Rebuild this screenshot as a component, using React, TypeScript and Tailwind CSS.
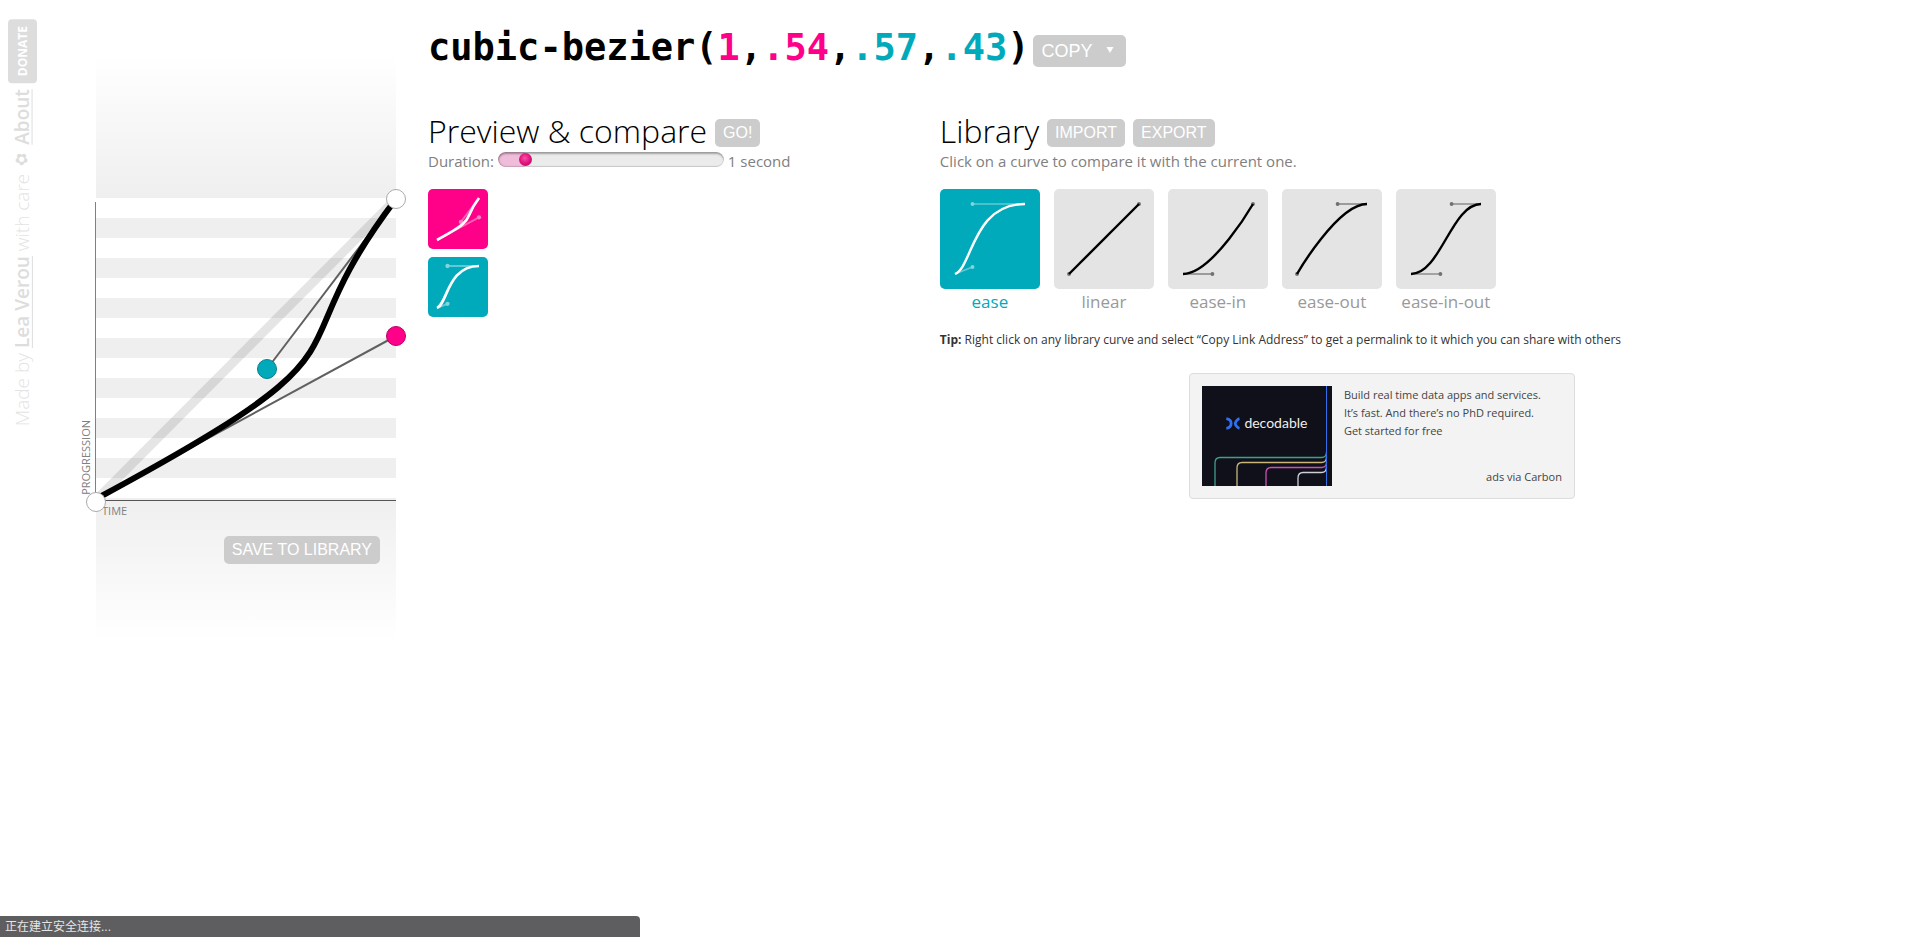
import React, { useState } from "react";

type Curve = [number, number, number, number];

const LIBRARY: { name: string; curve: Curve }[] = [
  { name: "ease", curve: [0.25, 0.1, 0.25, 1] },
  { name: "linear", curve: [0, 0, 1, 1] },
  { name: "ease-in", curve: [0.42, 0, 1, 1] },
  { name: "ease-out", curve: [0, 0, 0.58, 1] },
  { name: "ease-in-out", curve: [0.42, 0, 0.58, 1] },
];

const CURRENT: Curve = [1, 0.54, 0.57, 0.43];

function CurveIcon({ curve, stroke, className }: { curve: Curve; stroke: number; className: string }) {
  const px = (v: number) => 15 + v * 70;
  const py = (v: number) => 85 - v * 70;
  const [x1, y1, x2, y2] = curve;
  return (
    <svg viewBox="0 0 100 100" className={className} fill="none" stroke="currentColor" aria-hidden="true">
      <g opacity="0.5" strokeWidth={stroke * 0.7}>
        <path d={`M15 85L${px(x1)} ${py(y1)}M85 15L${px(x2)} ${py(y2)}`} opacity="0.75" />
        <circle cx={px(x1)} cy={py(y1)} r={stroke * 0.8} fill="currentColor" stroke="none" />
        <circle cx={px(x2)} cy={py(y2)} r={stroke * 0.8} fill="currentColor" stroke="none" />
      </g>
      <path d={`M15 85C${px(x1)} ${py(y1)} ${px(x2)} ${py(y2)} 85 15`} strokeWidth={stroke} />
    </svg>
  );
}

function SmallButton({ children }: { children: React.ReactNode }) {
  return (
    <button
      type="button"
      className="mt-1 h-7 rounded-[5px] bg-[#ccc] px-2 font-['Liberation_Sans',Arial,sans-serif] text-base leading-7 text-white"
    >
      {children}
    </button>
  );
}

function Credits() {
  return (
    <aside className="flex w-[5%] shrink-0 items-start pl-2 pt-[19px]">
      <p className="flex rotate-180 items-center whitespace-nowrap text-[19px] leading-[29px] text-[#e4e4e4] [writing-mode:vertical-rl]">
        <span>
          <span className="font-light">Made by </span>
          <a href="#lea" className="font-semibold text-[#ddd] underline">
            Lea Verou
          </a>
          <span className="font-light"> with care </span>
          <span className="font-['DejaVu_Sans',sans-serif] text-base text-[#ddd]">✿ </span>
          <a href="#about" className="font-semibold text-[#ddd] underline">
            About
          </a>
        </span>
        <a href="#donate" className="mt-[6px] rounded-[4px] bg-[#ddd] px-[7px] text-xs font-bold leading-[29px] text-white">
          DONATE
        </a>
      </p>
    </aside>
  );
}

function Plot() {
  return (
    <section aria-label="Curve editor" className="relative w-[300px] shrink-0 pt-12">
      <div className="h-[150px] bg-linear-to-b from-white from-5% to-[#efefef]" />
      <div className="h-[300px] bg-[repeating-linear-gradient(to_bottom,#fff_0,#fff_20px,#efefef_20px,#efefef_40px)]" />
      <div className="flex h-[150px] items-start justify-end bg-linear-to-b from-[#efefef] to-white to-95% pr-4 pt-[34px]">
        <SmallButton>SAVE TO LIBRARY</SmallButton>
      </div>
      <svg
        viewBox="0 0 300 650"
        className="pointer-events-none absolute left-0 top-0 h-[650px] w-[300px] overflow-visible"
        fill="none"
        aria-hidden="true"
      >
        <path d="M-1 202h1v299h-1z" fill="#808080" />
        <path d="M0 500h300v1H0z" fill="#555" />
        <path d="M0 500L300 199" stroke="#000" strokeOpacity="0.1" strokeWidth="9" />
        <path d="M0 499L300 336M300 199L171 369" stroke="#606060" strokeWidth="2" />
        <path d="M0 499C300 337 171 369 300 199" stroke="#000" strokeWidth="6" />
      </svg>
      <span className="absolute bottom-[153px] left-[-18px] rotate-180 text-[11px] leading-4 text-[#808080] [writing-mode:vertical-rl]">
        PROGRESSION
      </span>
      <span className="absolute left-1.5 top-[503px] text-[11px] leading-4 text-[#808080]">TIME</span>
      <button type="button" aria-label="Start point" className="absolute left-[-10px] top-[492px] size-5 rounded-full border border-[#aaa] bg-white" />
      <button type="button" aria-label="End point" className="absolute left-[290px] top-[189px] size-5 rounded-full border border-[#aaa] bg-white" />
      <button type="button" aria-label="First handle" className="absolute left-[290px] top-[326px] size-5 rounded-full border border-[#b8006a] bg-[#f08]" />
      <button type="button" aria-label="Second handle" className="absolute left-[161px] top-[359px] size-5 rounded-full border border-[#07808c] bg-[#0ab]" />
    </section>
  );
}

function Preview() {
  const [duration, setDuration] = useState(10);
  const fill = 4 + (duration / 85) * 66;
  return (
    <section>
      <header className="flex items-center gap-2">
        <h2 className="text-[32px] font-light leading-10 text-black">Preview &amp; compare</h2>
        <SmallButton>GO!</SmallButton>
      </header>
      <div className="flex items-start gap-1 text-[15px] leading-5 text-[#808080]">
        <label htmlFor="duration">Duration:</label>
        <input
          id="duration"
          type="range"
          min={0}
          max={100}
          value={duration}
          onChange={(e) => setDuration(Number(e.target.value))}
          style={{ backgroundSize: `${fill}% 100%` }}
          className="mt-px h-[15px] w-[226px] appearance-none rounded-full bg-[#ebebeb] bg-[linear-gradient(#efbcd9,#efbcd9)] bg-no-repeat shadow-[inset_0_2px_2px_rgba(0,0,0,0.3),inset_0_-1px_1px_rgba(0,0,0,0.1),inset_1px_0_2px_rgba(0,0,0,0.2)] [&::-webkit-slider-thumb]:size-[13px] [&::-webkit-slider-thumb]:appearance-none [&::-webkit-slider-thumb]:rounded-full [&::-webkit-slider-thumb]:bg-[radial-gradient(circle_at_45%_40%,#ff4fa8_0,#e0187f_45%,#a8005a_100%)]"
        />
        <output htmlFor="duration">1 second</output>
      </div>
      <div className="mt-[18px] flex flex-col gap-2">
        <div className="size-[60px] rounded-[5px] bg-[#f08] text-white">
          <CurveIcon curve={CURRENT} stroke={4.5} className="size-full" />
        </div>
        <div className="size-[60px] rounded-[5px] bg-[#0ab] text-white">
          <CurveIcon curve={LIBRARY[0].curve} stroke={4.5} className="size-full" />
        </div>
      </div>
    </section>
  );
}

function Ad() {
  return (
    <div className="mx-auto mt-6 flex w-[386px] gap-3 rounded-[4px] border border-[#ddd] bg-[#f3f3f3] p-3 text-[11px] leading-[18px] text-[#444]">
      <a href="#decodable" className="relative flex h-[100px] w-[130px] shrink-0 justify-center bg-[#10101a] pt-[27px]">
        <svg viewBox="0 0 130 100" className="absolute inset-0 size-full" fill="none" aria-hidden="true">
          <path d="M124.5 66q0 5.5-5 5.5H18q-5 0-5 5.5V100" stroke="#3f9f8a" strokeWidth="1.3" />
          <path d="M124.5 71q0 5.5-5 5.5H40q-5 0-5 5.5V100" stroke="#c9b577" strokeWidth="1.3" />
          <path d="M124.5 76q0 5.5-5 5.5H69q-5 0-5 5.5V100" stroke="#c950b5" strokeWidth="1.3" />
          <path d="M124.5 81q0 5.5-5 5.5H101q-5 0-5 5.5V100" stroke="#ccd0d4" strokeWidth="1.3" />
          <path d="M124.5 0V100" stroke="#3471e8" />
          <path
            d="M24.3 32.7c3.5 .5 4.8 2.5 4.8 4.8s-1.3 4.3-4.8 4.8M37.5 32.7c-2 .5-4.2 3-4.2 4.8s2.2 4.3 4.2 4.8"
            stroke="#2f6ff0"
            strokeWidth="2.8"
          />
        </svg>
        <span className="relative pl-[18px] font-['Lato',sans-serif] text-sm leading-5 text-[#eee]">decodable</span>
      </a>
      <div className="flex grow flex-col justify-between">
        <a href="#decodable">
          Build real time data apps and services.
          <br />
          It’s fast. And there’s no PhD required.
          <br />
          Get started for free
        </a>
        <a href="#carbon" className="self-end">
          ads via Carbon
        </a>
      </div>
    </div>
  );
}

function Library() {
  return (
    <section>
      <header className="flex items-center gap-2">
        <h2 className="text-[32px] font-light leading-10 text-black">Library</h2>
        <SmallButton>IMPORT</SmallButton>
        <SmallButton>EXPORT</SmallButton>
      </header>
      <p className="text-[15px] leading-5 text-[#808080]">Click on a curve to compare it with the current one.</p>
      <ul className="mt-[18px] flex flex-wrap gap-[14px]">
        {LIBRARY.map(({ name, curve }, i) => (
          <li key={name}>
            <a
              href={"#" + curve.join(",")}
              className={
                "flex w-[100px] flex-col text-center text-[17px] leading-[26px] " + (i === 0 ? "text-[#0ab]" : "text-[#999]")
              }
            >
              <span className={"block size-[100px] rounded-[5px] " + (i === 0 ? "bg-[#0ab] text-white" : "bg-[#e4e4e4] text-black")}>
                <CurveIcon curve={curve} stroke={2.4} className="size-full" />
              </span>
              <span>{name}</span>
            </a>
          </li>
        ))}
      </ul>
      <p className="mt-4 text-xs leading-[18px] text-[#333]">
        <strong>Tip:</strong> Right click on any library curve and select “Copy Link Address” to get a permalink to it which you can share with
        others
      </p>
      <Ad />
    </section>
  );
}

export default function App() {
  return (
    <div className="flex min-h-screen items-start bg-white font-['Open_Sans','Noto_Sans',sans-serif]">
      <Credits />
      <Plot />
      <main className="ml-8 mr-[5%] min-w-0 grow pt-6">
        <header className="flex items-center gap-1">
          <h1 className="whitespace-nowrap font-['DejaVu_Sans_Mono',monospace] text-[37px] font-bold leading-[48px] text-black">
            cubic-bezier(<span className="text-[#f08]">1</span>,<span className="text-[#f08]">.54</span>,
            <span className="text-[#0ab]">.57</span>,<span className="text-[#0ab]">.43</span>)
          </h1>
          <div className="relative mt-1.5">
            <select
              aria-label="Copy"
              className="block h-8 w-[93px] appearance-none rounded-[5px] bg-[#ccc] pl-2 font-['Liberation_Sans',Arial,sans-serif] text-[18px] leading-8 text-white"
            >
              <option>COPY</option>
            </select>
            <svg viewBox="0 0 8 6" className="pointer-events-none absolute right-3 top-3 h-1.5 w-2" fill="#fff" aria-hidden="true">
              <path d="M0.5 0H7.5L4 6z" />
            </svg>
          </div>
        </header>
        <div className="mt-[39px] grid grid-cols-[11fr_19fr]">
          <Preview />
          <Library />
        </div>
      </main>
      <div
        role="status"
        className="fixed bottom-0 left-0 h-[21px] w-1/3 rounded-tr-[4px] bg-[#5e5e60] pl-[5px] font-['Liberation_Sans','Noto_Sans_CJK_SC',sans-serif] text-xs leading-[23px] text-[#e6e6e6]"
      >
        正在建立安全连接...
      </div>
    </div>
  );
}
